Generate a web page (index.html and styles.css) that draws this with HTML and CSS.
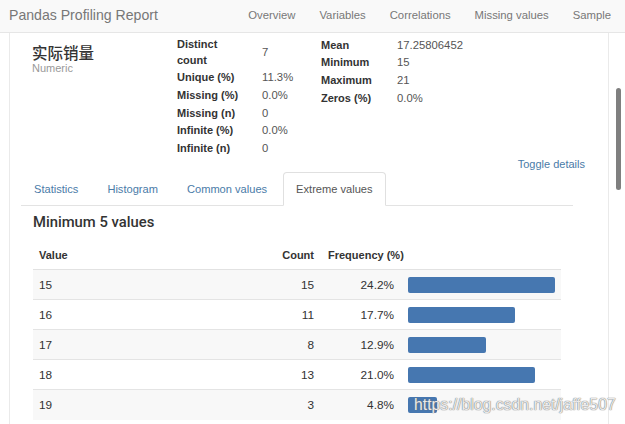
FILE: index.html
```html
<!DOCTYPE html>
<html lang="zh">
<head>
<meta charset="utf-8">
<title>Pandas Profiling Report</title>
<link rel="stylesheet" href="styles.css">
</head>
<body>
<header class="navbar">
  <div class="brand">Pandas Profiling Report</div>
  <nav class="nav">
    <a>Overview</a>
    <a>Variables</a>
    <a>Correlations</a>
    <a>Missing values</a>
    <a>Sample</a>
  </nav>
</header>
<main class="page">
  <section class="variable">
    <div class="var-head">
      <div class="var-name">
        <h3 class="var-title">实际销量</h3>
        <div class="var-type">Numeric</div>
      </div>
      <dl class="stats stats-a">
        <dt>Distinct count</dt><dd>7</dd>
        <dt>Unique (%)</dt><dd>11.3%</dd>
        <dt>Missing (%)</dt><dd>0.0%</dd>
        <dt>Missing (n)</dt><dd>0</dd>
        <dt>Infinite (%)</dt><dd>0.0%</dd>
        <dt>Infinite (n)</dt><dd>0</dd>
      </dl>
      <dl class="stats stats-b">
        <dt>Mean</dt><dd>17.25806452</dd>
        <dt>Minimum</dt><dd>15</dd>
        <dt>Maximum</dt><dd>21</dd>
        <dt>Zeros (%)</dt><dd>0.0%</dd>
      </dl>
    </div>
    <div class="toggle-row"><a class="toggle">Toggle details</a></div>
    <div class="details">
      <ul class="tabs">
        <li><a>Statistics</a></li>
        <li><a>Histogram</a></li>
        <li><a>Common values</a></li>
        <li class="active"><a>Extreme values</a></li>
      </ul>
      <h4 class="sub-title">Minimum 5 values</h4>
      <table class="freq">
        <colgroup>
          <col class="c-value"><col class="c-count"><col class="c-pct"><col class="c-bar">
        </colgroup>
        <thead>
          <tr><th class="t-left">Value</th><th class="t-right">Count</th><th class="t-freq" colspan="2">Frequency (%)</th></tr>
        </thead>
        <tbody>
          <tr><td>15</td><td class="t-right">15</td><td class="t-right">24.2%</td><td class="t-bar"><div class="bar" style="width:147px"></div></td></tr>
          <tr><td>16</td><td class="t-right">11</td><td class="t-right">17.7%</td><td class="t-bar"><div class="bar" style="width:107px"></div></td></tr>
          <tr><td>17</td><td class="t-right">8</td><td class="t-right">12.9%</td><td class="t-bar"><div class="bar" style="width:78px"></div></td></tr>
          <tr><td>18</td><td class="t-right">13</td><td class="t-right">21.0%</td><td class="t-bar"><div class="bar" style="width:127px"></div></td></tr>
          <tr><td>19</td><td class="t-right">3</td><td class="t-right">4.8%</td><td class="t-bar"><div class="bar" style="width:29px"></div></td></tr>
        </tbody>
      </table>
    </div>
  </section>
</main>
<div class="scrollbar"><div class="thumb"></div></div>
<div class="watermark">https://blog.csdn.net/jaffe507</div>
</body>
</html>
```

FILE: styles.css
```css
* { box-sizing: border-box; }
html, body { margin: 0; padding: 0; }
body {
  font-family: "Liberation Sans", Arial, sans-serif;
  color: #333;
  background: #fff;
  width: 625px;
  height: 424px;
  overflow: hidden;
  position: relative;
}
a { cursor: pointer; }

.navbar {
  height: 33px;
  background: #f9f9f9;
  border-bottom: 1px solid #e6e6e6;
  display: flex;
  align-items: center;
  padding: 0 14px 2px 9px;
}
.brand {
  font-size: 14.1px;
  color: #777;
}
.nav {
  margin-left: auto;
  display: flex;
  gap: 24px;
}
.nav a {
  font-size: 11.3px;
  color: #777;
}

.page {
  margin-left: 9px;
  width: 600px;
  height: 391px;
  border-left: 1px solid #eaeaea;
  border-right: 1px solid #eaeaea;
}

.var-head {
  display: flex;
  padding-top: 2px;
}
.var-name {
  width: 167px;
  padding-left: 22px;
  padding-top: 6.5px;
}
.var-title {
  margin: 0;
  font-family: "Noto Sans CJK SC", "Liberation Sans", sans-serif;
  font-size: 15.5px;
  font-weight: 500;
  line-height: 20px;
  color: #333;
}
.var-type {
  font-size: 11px;
  line-height: 13px;
  color: #999;
}

.stats {
  margin: 0;
  display: grid;
  grid-template-columns: 68px auto;
  column-gap: 17px;
  align-content: start;
  align-items: center;
  font-size: 11px;
  line-height: 16px;
}
.stats dt {
  font-weight: bold;
  color: #333;
  padding: 0.8px 0;
}
.stats dd {
  margin: 0;
  color: #555;
  font-size: 11.3px;
  padding: 0.8px 0;
}
.stats-a { width: 144px; }
.stats-b {
  grid-template-columns: 59px auto;
  padding-top: 1px;
}

.toggle-row {
  display: flex;
  justify-content: flex-end;
  padding-right: 23px;
  margin-top: 0;
  line-height: 14px;
}
.toggle {
  font-size: 11px;
  color: #4a7ba8;
}

.details {
  margin-top: 1px;
}
.tabs {
  list-style: none;
  margin: 0 0 0 11px;
  padding: 0;
  width: 552px;
  display: flex;
  border-bottom: 1px solid #e3e3e3;
}
.tabs li {
  margin-right: 3px;
  margin-bottom: -1px;
}
.tabs a {
  display: block;
  height: 34px;
  padding: 0 12px;
  line-height: 32px;
  font-size: 11.1px;
  color: #4a7ba8;
  border: 1px solid transparent;
  border-radius: 4px 4px 0 0;
}
.tabs .active a {
  color: #555;
  background: #fff;
  border-color: #e0e0e0 #e0e0e0 transparent;
}

.sub-title {
  margin: 7px 0 10px 23px;
  font-family: Roboto, "Liberation Sans", sans-serif;
  font-size: 14.8px;
  font-weight: 500;
  line-height: 18px;
  color: #333;
}

.freq {
  margin-left: 23px;
  width: 528px;
  table-layout: fixed;
  border-collapse: collapse;
  font-size: 11.8px;
  color: #333;
}
.c-value { width: 227px; }
.c-count { width: 60px; }
.c-pct { width: 80px; }
.c-bar { width: 161px; }
.freq th {
  font-size: 11px;
  font-weight: bold;
  height: 29px;
  padding: 0 6px;
  line-height: 14px;
  border-bottom: 1px solid #e2e2e2;
}
.freq td {
  height: 30px;
  padding: 0 6px;
  line-height: 14px;
  border-top: 1px solid #e4e4e4;
}
.freq tbody tr:nth-child(odd) { background: #f8f8f8; }
.t-left { text-align: left; }
.t-right { text-align: right; }
.freq .t-freq { text-align: left; padding-left: 8px; }
.freq .t-bar { padding-left: 8px; }
.bar {
  height: 16px;
  background: #4677b0;
  border-radius: 2px;
}

.scrollbar {
  position: absolute;
  top: 33px;
  right: 0;
  width: 16px;
  bottom: 0;
}
.thumb {
  position: absolute;
  left: 7px;
  top: 55px;
  width: 5px;
  height: 102px;
  border-radius: 3px;
  background: #7f7f7f;
}

.watermark {
  position: absolute;
  left: 414px;
  top: 395px;
  font-size: 15.8px;
  line-height: 20px;
  color: rgba(255, 255, 255, 0.85);
  text-shadow: 0 0 1px #777, 0 0 1px #777;
  white-space: nowrap;
}
```
